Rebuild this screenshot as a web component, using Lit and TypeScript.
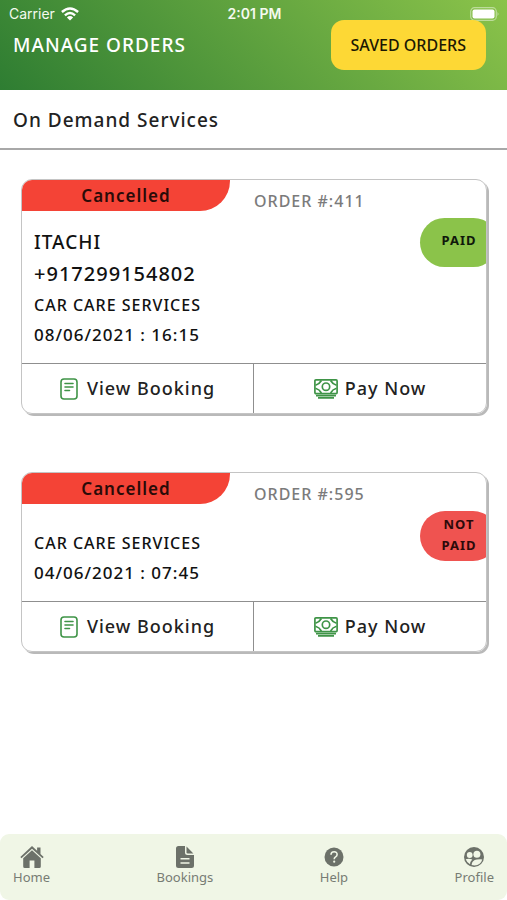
import { LitElement, html, css, svg, nothing } from "lit";
import { customElement, property } from "lit/decorators.js";

interface Order {
  id: number;
  status: string;
  paid: boolean;
  name?: string;
  phone?: string;
  service: string;
  date: string;
}

const orders: Order[] = [
  {
    id: 411,
    status: "Cancelled",
    paid: true,
    name: "ITACHI",
    phone: "+917299154802",
    service: "CAR CARE SERVICES",
    date: "08/06/2021 : 16:15",
  },
  {
    id: 595,
    status: "Cancelled",
    paid: false,
    service: "CAR CARE SERVICES",
    date: "04/06/2021 : 07:45",
  },
];

const noteIcon = svg`<svg width="18" height="22" viewBox="0 0 18 22" fill="none" stroke="#3f9447" stroke-width="1.6" stroke-linecap="round" aria-hidden="true">
  <rect x="1" y="1" width="16" height="20" rx="3"/>
  <path d="M5 5.500h8M5 9h8M5 12.500h4.500"/>
</svg>`;

const cashIcon = svg`<svg width="24" height="20" viewBox="0 0 24 20" fill="none" stroke="#3f9447" aria-hidden="true">
  <rect x="0.900" y="0.900" width="22.200" height="13.700" rx="1" stroke-width="1.700"/>
  <path d="M1.500 6.200Q5.500 5 7.400 1.500M22.500 6.200Q18.500 5 16.600 1.500M1.500 9.300Q5.500 10.500 7.400 14M22.500 9.300Q18.500 10.500 16.600 14" stroke-width="1.700"/>
  <circle cx="12" cy="7.700" r="3.700" stroke-width="1.700"/>
  <path d="M2 16.600h20M4 18.900h16" stroke-width="1.700"/>
</svg>`;

const homeIcon = svg`<svg width="24" height="22" viewBox="0 0 24 22" fill="#6c7169" aria-hidden="true">
  <path d="M12 0 .3 11l1.200 1.300L12 2.700l10.500 9.600 1.200-1.300-3.200-3V1.500h-3.400v3.300z"/>
  <path d="M12 4.300 3.200 12.300V20.500q0 1.500 1.500 1.500H9.600v-7.500h4.800V22h4.900q1.500 0 1.500-1.500v-8.200z"/>
</svg>`;

const fileIcon = svg`<svg width="18" height="22" viewBox="0 0 18 22" fill="#6c7169" aria-hidden="true">
  <path fill-rule="evenodd" d="M2.500 0H9v6.500Q9 9 11.500 9H18v10.500q0 2.500-2.500 2.500h-13Q0 22 0 19.500v-17Q0 0 2.500 0zM4.500 12v1.500h9V12zm0 4.300v1.500h9v-1.500z"/>
  <path d="M10.500.6 17.400 7.500h-5.600q-1.300 0-1.300-1.300z"/>
</svg>`;

const helpIcon = svg`<svg width="20" height="20" viewBox="0 0 20 20" aria-hidden="true">
  <circle cx="10" cy="10" r="9.500" fill="#6c7169"/>
  <path d="M7 7.800Q7 4.800 10.100 4.800T13.100 7.600Q13.100 9 11.600 9.900 10.200 10.700 10.200 12.200" fill="none" stroke="#f0f6e6" stroke-width="1.600"/>
  <circle cx="10.200" cy="14.700" r="1.100" fill="#f0f6e6"/>
</svg>`;

const peopleIcon = svg`<svg width="20" height="20" viewBox="0 0 20 20" aria-hidden="true">
  <circle cx="10" cy="10" r="10" fill="#6c7169"/>
  <g fill="#f0f6e6">
    <circle cx="5.700" cy="8" r="2.900"/>
    <circle cx="12.900" cy="7.200" r="3.500"/>
    <path d="M1.700 12.300Q5 11.300 8.300 12.500 6.300 14.200 6 17.300 2.900 15.700 1.700 12.300z"/>
    <path d="M7.600 18Q8 13.200 12.800 12.600 16.500 12.200 18.300 12.500 16.800 18 10.600 18.400 9 18.400 7.600 18z"/>
  </g>
</svg>`;

@customElement("status-bar")
class StatusBar extends LitElement {
  static styles = css`
    :host {
      display: grid;
      grid-template-columns: 1fr auto 1fr;
      align-items: center;
      box-sizing: border-box;
      height: 20px;
      padding: 7px 7px 0 9px;
      color: #f4faef;
      font: 14px/14px Inter, sans-serif;
    }
    .carrier {
      display: flex;
      align-items: center;
      gap: 6px;
    }
    .time {
      font-weight: 600;
    }
    .battery {
      justify-self: end;
      display: block;
    }
  `;

  render() {
    return html`
      <span class="carrier">
        Carrier
        <svg width="18" height="14" viewBox="0 0 18 14" fill="none" stroke="#fff" stroke-width="2.400" aria-hidden="true">
          <path d="M.9 5Q9-2.200 17.100 5M3.900 8.300Q9 3.700 14.100 8.300" />
          <path d="M9 13.600 5.900 10.400Q9 7.800 12.100 10.400z" fill="#fff" stroke="none" />
        </svg>
      </span>
      <span class="time">2:01 PM</span>
      <svg class="battery" width="30" height="14" viewBox="0 0 30 14" aria-hidden="true">
        <rect x="0.700" y="0.700" width="25.600" height="12.600" rx="3.800" fill="none" stroke="#fff" stroke-opacity="0.450" stroke-width="1.200" />
        <rect x="2.500" y="2.500" width="22" height="9" rx="2" fill="#fff" />
        <path d="M27.600 4.800q1.800 2.200 0 4.400z" fill="#fff" fill-opacity="0.600" />
      </svg>
    `;
  }
}

@customElement("order-card")
class OrderCard extends LitElement {
  @property({ attribute: false }) order!: Order;

  static styles = css`
    :host {
      display: block;
    }
    .card {
      position: relative;
      overflow: hidden;
      border: 1px solid #c4c4c4;
      border-radius: 11px;
      background: #fff;
    }
    .frame {
      border-radius: 11px;
      box-shadow: 2px 2px 0 #b9b9b9;
    }
    .top {
      display: grid;
      grid-template-columns: 1fr 1fr;
      align-items: start;
      height: 31px;
    }
    .status {
      margin-right: 24px;
      border-radius: 0 0 30px 0;
      background: #f44336;
      color: #2a0b08;
      font-size: 17px;
      font-weight: 600;
      line-height: 31px;
      text-align: center;
    }
    .number {
      color: #7b7b7b;
      font-size: 16px;
      line-height: 43px;
    }
    .badge {
      position: absolute;
      top: 38px;
      right: -12px;
      box-sizing: border-box;
      width: 78px;
      min-height: 49px;
      padding: 3px 16px 5px;
      border-radius: 25px;
      background: #8bc34a;
      color: #10180a;
      font-size: 13px;
      font-weight: 700;
      line-height: 21px;
      text-align: center;
    }
    .paid {
      padding-top: 12px;
    }
    .unpaid {
      background: #ef5350;
      color: #2c0a0a;
    }
    .details {
      padding: 15px 12px 13px;
      color: #111;
    }
    .customer {
      min-height: 9px;
      font-size: 19px;
      line-height: 32px;
    }
    .customer .phone {
      font-size: 20px;
    }
    .service {
      font-size: 16px;
      line-height: 30px;
    }
    .service .date {
      font-size: 17px;
    }
    p {
      margin: 0;
    }
    .actions {
      display: grid;
      grid-template-columns: 1fr 1fr;
      border-top: 1px solid #8f8f8f;
    }
    button {
      display: flex;
      align-items: center;
      justify-content: center;
      height: 49px;
      padding: 0;
      border: 0;
      background: none;
      color: #222;
      font: inherit;
      font-size: 18px;
      line-height: 24px;
      letter-spacing: inherit;
      gap: 9px;
    }
    button:first-child {
      border-right: 1px solid #8f8f8f;
    }
    button + button {
      gap: 7px;
    }
    button span {
      padding-bottom: 2px;
    }
  `;

  render() {
    const o = this.order;
    return html`
      <div class="frame">
        <article class="card">
          <div class="top">
            <span class="status">${o.status}</span>
            <span class="number">ORDER #:${o.id}</span>
          </div>
          <span class="badge ${o.paid ? "paid" : "unpaid"}">${o.paid ? "PAID" : "NOT PAID"}</span>
          <div class="details">
            <div class="customer">
              ${o.name ? html`<p>${o.name}</p>` : nothing}
              ${o.phone ? html`<p class="phone">${o.phone}</p>` : nothing}
            </div>
            <div class="service">
              <p>${o.service}</p>
              <p class="date">${o.date}</p>
            </div>
          </div>
          <div class="actions">
            <button type="button">${noteIcon}<span>View Booking</span></button>
            <button type="button">${cashIcon}<span>Pay Now</span></button>
          </div>
        </article>
      </div>
    `;
  }
}

@customElement("app-root")
class AppRoot extends LitElement {
  static styles = css`
    :host {
      display: flex;
      flex-direction: column;
      min-height: 100vh;
      background: #fff;
      font-family: "Noto Sans", sans-serif;
      font-weight: 500;
      letter-spacing: 1px;
    }
    header {
      height: 90px;
      background: linear-gradient(45deg, #2e7d32, #8bc34a);
    }
    status-bar {
      letter-spacing: normal;
    }
    .bar {
      display: flex;
      align-items: center;
      justify-content: space-between;
      padding: 0 21px 0 13px;
    }
    h1 {
      margin: 0;
      color: #fff;
      font-size: 19px;
      font-weight: 500;
    }
    .saved {
      height: 50px;
      padding: 0 20px;
      border: 0;
      border-radius: 13px;
      background: #fdd835;
      color: #1c1803;
      font: inherit;
      font-size: 16px;
      letter-spacing: normal;
    }
    h2 {
      margin: 0;
      padding: 2px 13px 0;
      border-bottom: 2px solid #a8a8a8;
      color: #222;
      font-size: 19px;
      font-weight: 500;
      line-height: 56px;
    }
    main {
      flex: 1;
      display: flex;
      flex-direction: column;
      gap: 58px;
      padding: 29px 20px 58px 21px;
    }
    nav {
      display: flex;
      justify-content: space-between;
      box-sizing: border-box;
      height: 66px;
      padding: 12px 13px 0;
      border-radius: 9px;
      background: #f0f6e6;
      letter-spacing: normal;
    }
    nav a {
      display: flex;
      flex-direction: column;
      align-items: center;
      color: #777c74;
      font-size: 13px;
      font-weight: 400;
      line-height: 18px;
      text-decoration: none;
    }
    .icon {
      display: flex;
      align-items: center;
      height: 22px;
    }
  `;

  render() {
    const links = [
      { label: "Home", icon: homeIcon },
      { label: "Bookings", icon: fileIcon },
      { label: "Help", icon: helpIcon },
      { label: "Profile", icon: peopleIcon },
    ];
    return html`
      <header>
        <status-bar></status-bar>
        <div class="bar">
          <h1>MANAGE ORDERS</h1>
          <button class="saved" type="button">SAVED ORDERS</button>
        </div>
      </header>
      <h2>On Demand Services</h2>
      <main>${orders.map((o) => html`<order-card .order=${o}></order-card>`)}</main>
      <nav>
        ${links.map(
          (l) => html`<a href="#${l.label.toLowerCase()}"><span class="icon">${l.icon}</span>${l.label}</a>`
        )}
      </nav>
    `;
  }
}
